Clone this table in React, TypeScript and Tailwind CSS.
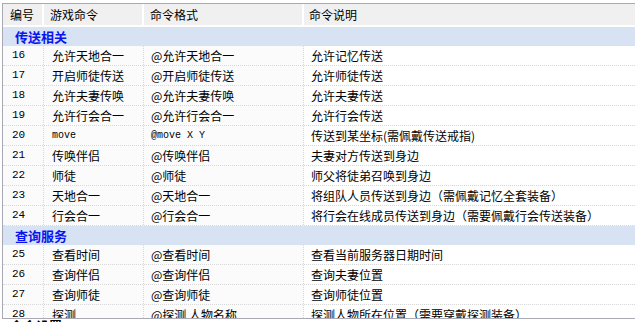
import React from 'react';

type Row = { no: string; cmd: string; fmt: string; desc: string; mono?: boolean };
type Group = { title: string; rows: Row[] };

const groups: Group[] = [
  {
    title: '传送相关',
    rows: [
      { no: '16', cmd: '允许天地合一', fmt: '@允许天地合一', desc: '允许记忆传送' },
      { no: '17', cmd: '开启师徒传送', fmt: '@开启师徒传送', desc: '允许师徒传送' },
      { no: '18', cmd: '允许夫妻传唤', fmt: '@允许夫妻传唤', desc: '允许夫妻传送' },
      { no: '19', cmd: '允许行会合一', fmt: '@允许行会合一', desc: '允许行会传送' },
      { no: '20', cmd: 'move', fmt: '@move X Y', desc: '传送到某坐标(需佩戴传送戒指)', mono: true },
      { no: '21', cmd: '传唤伴侣', fmt: '@传唤伴侣', desc: '夫妻对方传送到身边' },
      { no: '22', cmd: '师徒', fmt: '@师徒', desc: '师父将徒弟召唤到身边' },
      { no: '23', cmd: '天地合一', fmt: '@天地合一', desc: '将组队人员传送到身边（需佩戴记忆全套装备）' },
      { no: '24', cmd: '行会合一', fmt: '@行会合一', desc: '将行会在线成员传送到身边（需要佩戴行会传送装备）' },
    ],
  },
  {
    title: '查询服务',
    rows: [
      { no: '25', cmd: '查看时间', fmt: '@查看时间', desc: '查看当前服务器日期时间' },
      { no: '26', cmd: '查询伴侣', fmt: '@查询伴侣', desc: '查询夫妻位置' },
      { no: '27', cmd: '查询师徒', fmt: '@查询师徒', desc: '查询师徒位置' },
      { no: '28', cmd: '探测', fmt: '@探测 人物名称', desc: '探测人物所在位置（需要穿戴探测装备）' },
    ],
  },
];

const cjk = { fontFamily: '"Noto Sans CJK SC", "Noto Sans", sans-serif' };
const mono = { fontFamily: '"Liberation Mono", "DejaVu Sans Mono", monospace' };

function DataRow({ r }: { r: Row }) {
  return (
    <div className="flex h-[20px] items-center bg-[#fbfbfb] border-b border-dotted border-[#d8d8d8] text-[12px] leading-none text-black">
      <div className="w-[41px] shrink-0 h-full flex items-center pl-[9px] border-r border-dotted border-[#d8d8d8] text-[11px]" style={mono}>
        {r.no}
      </div>
      <div
        className={`w-[100px] shrink-0 h-full flex items-center pl-[8px] border-r border-dotted border-[#d8d8d8] ${r.mono ? 'text-[10px]' : ''}`}
        style={r.mono ? mono : cjk}
      >
        {r.cmd}
      </div>
      <div
        className={`w-[160px] shrink-0 h-full flex items-center pl-[7px] border-r border-dotted border-[#d8d8d8] ${r.mono ? 'text-[10px]' : ''}`}
        style={r.mono ? mono : cjk}
      >
        {r.fmt}
      </div>
      <div className="flex-1 h-full flex items-center pl-[7px] whitespace-nowrap bg-white" style={cjk}>
        {r.desc}
      </div>
    </div>
  );
}

export default function App() {
  return (
    <div className="w-[635px] h-[322px] overflow-hidden bg-white pt-[3px] pl-[2px]" style={cjk}>
      <div className="h-[316px] overflow-hidden border-t border-l border-b border-[#a9a9b4] bg-white">
        <div className="flex h-[23px] text-[12px] text-black border-b-2 border-white">
          <div className="w-[39px] shrink-0 bg-[#f0f0f0] flex items-center pl-[7px] mr-[2px]">编号</div>
          <div className="w-[98px] shrink-0 bg-[#f0f0f0] flex items-center pl-[6px] mr-[2px]">游戏命令</div>
          <div className="w-[158px] shrink-0 bg-[#f0f0f0] flex items-center pl-[6px] mr-[2px]">命令格式</div>
          <div className="flex-1 bg-[#f0f0f0] flex items-center pl-[5px]">命令说明</div>
        </div>
        {groups.map((g) => (
          <div key={g.title}>
            <div className="h-[19px] flex items-center bg-[#d7e3f3] pl-[12px] text-[13px] font-bold text-[#0a14f0]">
              {g.title}
            </div>
            {g.rows.map((r) => (
              <DataRow key={r.no} r={r} />
            ))}
          </div>
        ))}
      </div>
      <div className="pl-[8px] text-[13px] font-bold leading-none text-black">命令设置</div>
    </div>
  );
}
